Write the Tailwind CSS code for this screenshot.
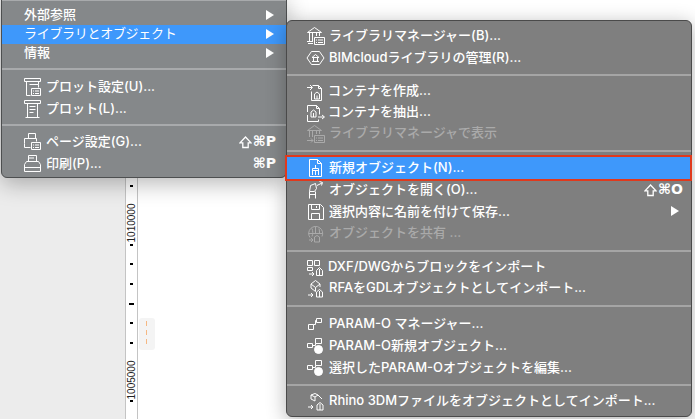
<!DOCTYPE html>
<html lang="ja">
<head>
<meta charset="UTF-8">
<title>Menu</title>
<script src="https://cdn.jsdelivr.net/npm/@tailwindcss/browser@4"></script>
</head>
<body class="bg-white">
<div class="relative w-[695px] h-[419px] overflow-hidden flex bg-white font-['Inter','Noto_Sans_CJK_JP',sans-serif] font-medium text-[13px] leading-none text-white">
  <!-- background: side panel + ruler -->
  <div class="w-[125px] h-full bg-[#ececec]"></div>
  <div class="relative w-[13px] h-full bg-white border-x border-[#c4c4c4] text-black">
    <span class="absolute left-[4px] top-[185px] w-[3px] h-[2px] bg-black"></span>
    <span class="absolute left-[4px] top-[244px] w-[3px] h-[2px] bg-black"></span>
    <span class="absolute left-[4px] top-[263px] w-[3px] h-[2px] bg-black"></span>
    <span class="absolute left-[4px] top-[283px] w-[3px] h-[2px] bg-black"></span>
    <span class="absolute left-[3px] top-[303px] w-[5px] h-[2px] bg-black"></span>
    <span class="absolute left-[4px] top-[322px] w-[3px] h-[2px] bg-black"></span>
    <span class="absolute left-[4px] top-[342px] w-[3px] h-[2px] bg-black"></span>
    <span class="absolute left-[4px] top-[400px] w-[3px] h-[2px] bg-black"></span>
    <span class="absolute left-[-15px] top-[218px] w-[42px] h-[10px] -rotate-90 text-center font-['Liberation_Sans',sans-serif] font-normal text-[10px] leading-[10px] text-[#222]">1010000</span>
    <span class="absolute left-[-15px] top-[375px] w-[42px] h-[10px] -rotate-90 text-center font-['Liberation_Sans',sans-serif] font-normal text-[10px] leading-[10px] text-[#222]">1005000</span>
  </div>
  <div class="relative flex-1 h-full bg-white">
    <div class="absolute left-[1px] top-[318px] w-[16px] h-[32px] rounded-[3px] bg-[#f4f4f4] pl-[7px] pt-[3px]">
      <svg class="block w-[1px] h-[26px]" viewBox="0 0 1 26" stroke="#f6b883"><path d="M.5 0v26" stroke-dasharray="5 4"/></svg>
    </div>
  </div>

  <!-- left menu -->
  <div class="absolute left-[1px] top-[-4px] w-[286px] h-[182px] pt-[2px] rounded-b-[6px] bg-[#85888a] border border-[#4d4f50] shadow-[0_6px_22px_rgba(0,0,0,0.28)] [&>div>span]:-translate-y-px">
    <div class="h-[2px] mb-[5px] bg-[#a8aaac]"></div>
    <div class="flex items-center h-[19px] pl-[22px] pr-[12px]"><span>外部参照</span><span class="ml-auto w-0 h-0 border-y-[5px] border-y-transparent border-l-[8px] border-l-white"></span></div>
    <div class="flex items-center h-[19px] pl-[22px] pr-[12px] bg-[#3e98fb]"><span class="font-normal tracking-[-0.3px]">ライブラリとオブジェクト</span><span class="ml-auto w-0 h-0 border-y-[5px] border-y-transparent border-l-[8px] border-l-white"></span></div>
    <div class="flex items-center h-[19px] pl-[22px] pr-[12px]"><span>情報</span><span class="ml-auto w-0 h-0 border-y-[5px] border-y-transparent border-l-[8px] border-l-white"></span></div>
    <div class="h-[2px] mt-[5px] mb-[6px] bg-[#a8aaac]"></div>
    <div class="flex items-center h-[22px] pl-[21px] pr-[10px]">
      <svg class="w-[19px] h-[20px] mr-[4px]" viewBox="0 0 19 20" fill="none" stroke="white"><path d="M1.500 1.500h16v3h-16zM3.500 4.500v14h4M15.500 4.500v3M6.500 7.500h9v3M8.500 11.500h9v7h-9zM10 14h1M12 14h4M10 16.500h1M12 16.500h4"/></svg>
      <span>プロット設定(U)...</span>
    </div>
    <div class="flex items-center h-[22px] pl-[21px] pr-[10px]">
      <svg class="w-[19px] h-[20px] mr-[4px]" viewBox="0 0 19 20" fill="none" stroke="white"><path d="M1.500 1.500h16v3h-16zM4.500 4.500v14h10v-14M6.500 7.500h6M6.500 10.500h6M6.500 13.500h4M2.500 18.500h14"/></svg>
      <span>プロット(L)...</span>
    </div>
    <div class="h-[2px] mt-[4px] mb-[5px] bg-[#a8aaac]"></div>
    <div class="flex items-center h-[22px] pl-[21px] pr-[10px]">
      <svg class="w-[19px] h-[20px] mr-[4px]" viewBox="0 0 19 20" fill="none" stroke="white"><path d="M5.500 6.500v-5h7v5M1.500 11.500v-5h12v3M1.500 11.500v4h6M8.500 10.500h9v7h-9zM10 13h1M12 13h4M10 15.500h1M12 15.500h4"/></svg>
      <span>ページ設定(G)...</span>
      <svg class="ml-auto mr-[1px] w-[13px] h-[13px]" viewBox="0 0 13 13" fill="none" stroke="white" stroke-width="1.300"><path d="M6.500 1L12 6.800H9.200V11.500H3.800V6.800H1z"/></svg>
      <span class="font-['DejaVu_Sans',sans-serif] font-bold text-[14px]">⌘P</span>
    </div>
    <div class="flex items-center h-[22px] pl-[21px] pr-[10px]">
      <svg class="w-[19px] h-[20px] mr-[4px]" viewBox="0 0 19 20" fill="none" stroke="white"><path d="M5.500 7.500v-6h8v6M1.500 17.500v-7l2-3h12l2 3v7zM1.500 13.500h16M6 4h5"/></svg>
      <span>印刷(P)...</span>
      <span class="ml-auto font-['DejaVu_Sans',sans-serif] font-bold text-[14px]">⌘P</span>
    </div>
  </div>

  <!-- submenu -->
  <div class="absolute left-[286px] top-[20px] w-[406px] h-[397px] pt-[4px] rounded-[6px] bg-[#7f7f7f] border border-[#4a4a4a] shadow-[0_4px_20px_rgba(0,0,0,0.3)] [&>div>span]:-translate-y-px">
    <div class="flex items-center h-[22px] pl-[19px]">
      <svg class="w-[19px] h-[20px] mr-[4px]" viewBox="0 0 19 20" fill="none" stroke="white"><path d="M1.500 6.500h14L8.500 1.500zM3.500 7v8M6.500 7v8M10.500 7v3M13.500 7v3M1 15.500h6M2 17.500h5M8.500 11.500h10v7h-10zM10 14h1M12 14h5M10 16.500h1M12 16.500h5"/></svg>
      <span>ライブラリマネージャー(B)...</span>
    </div>
    <div class="flex items-center h-[22px] pl-[19px]">
      <svg class="w-[19px] h-[20px] mr-[4px]" viewBox="0 0 19 20" fill="none" stroke="white"><path d="M5.500 3.500h8l4.500 6.500-4.500 6.500h-8L1 10zM6 9.500h7L9.500 6.500zM7.500 10v3M11.500 10v3M6 13.500h7"/></svg>
      <span>BIMcloudライブラリの管理(R)...</span>
    </div>
    <div class="h-[2px] mt-[5px] mb-[5px] bg-[#a5a5a5]"></div>
    <div class="flex items-center h-[21px] pl-[19px]">
      <svg class="w-[19px] h-[20px] mr-[3px]" viewBox="0 0 19 20" fill="none" stroke="white"><path d="M6.500 3.500h6l3 3v12h-10v-9M12.500 3.500v3h3M1 5.500h5M4 3l2.500 2.500L4 8M8.500 12l2.500-2 2.500 2v5h-5zM11 13.500v3.500"/></svg>
      <span>コンテナを作成...</span>
    </div>
    <div class="flex items-center h-[21px] pl-[19px]">
      <svg class="w-[19px] h-[20px] mr-[3px]" viewBox="0 0 19 20" fill="none" stroke="white"><path d="M1.500 9v-6.500h9l3 3v6M10.500 2.500v3h3M1.500 12v6.500h11v-2M5 9l2.500-2L10 9v5H5zM7.500 10v4M12 14h6M16 12l2.500 2-2.500 2"/></svg>
      <span>コンテナを抽出...</span>
    </div>
    <div class="flex items-center h-[21px] pl-[19px] text-[#aaaaaa]">
      <svg class="w-[19px] h-[20px] mr-[4px]" viewBox="0 0 19 20" fill="none" stroke="#aaaaaa"><path d="M1.500 6.500h14L8.500 1.500zM3.500 7v6M6.500 7v6M10.500 7v3M13.500 7v3M8.500 11.500h10v7h-10zM10 14h1M12 14h5M10 16.500h1M12 16.500h5M1 16.500h6M5 14.500l2 2-2 2"/></svg>
      <span>ライブラリマネージャで表示</span>
    </div>
    <div class="h-[2px] mt-[6px] mb-[5px] bg-[#a5a5a5]"></div>
    <div class="flex items-center h-[22px] pl-[19px] mr-[1px] bg-[#3e98fb] outline-2 outline-[#e0391c]">
      <svg class="w-[19px] h-[20px] mr-[4px]" viewBox="0 0 19 20" fill="none" stroke="white"><path d="M3.500 1.500h8l4 4v13h-12zM11.500 1.500v4h4M6.500 17v-6.500h6V17M6.500 12.500h6M9.500 7v3M9.500 12.500V17"/></svg>
      <span>新規オブジェクト(N)...</span>
    </div>
    <div class="flex items-center h-[22px] pl-[19px] pr-[8px]">
      <svg class="w-[19px] h-[20px] mr-[4px]" viewBox="0 0 19 20" fill="none" stroke="white"><path d="M4.500 5.500l5-2 1 5-2 3h-5zM3.500 11.500v7M9.500 11.500v7M3.500 14.500h6M11 5.500l5-2.500M13.500 1.500l3 1-1 3"/></svg>
      <span>オブジェクトを開く(O)...</span>
      <svg class="ml-auto mr-[1px] w-[13px] h-[13px]" viewBox="0 0 13 13" fill="none" stroke="white" stroke-width="1.300"><path d="M6.500 1L12 6.800H9.200V11.500H3.800V6.800H1z"/></svg>
      <span class="font-['DejaVu_Sans',sans-serif] font-bold text-[14px]">⌘O</span>
    </div>
    <div class="flex items-center h-[22px] pl-[19px] pr-[12px]">
      <svg class="w-[19px] h-[20px] mr-[4px]" viewBox="0 0 19 20" fill="none" stroke="white"><path d="M2.500 2.500h12l3 3v12h-15zM5.500 2.500v5h8v-5M5.500 17.500v-6h8v6M10.500 4v2"/></svg>
      <span>選択内容に名前を付けて保存...</span>
      <span class="ml-auto w-0 h-0 border-y-[5px] border-y-transparent border-l-[8px] border-l-white"></span>
    </div>
    <div class="flex items-center h-[21px] pl-[19px] text-[#aaaaaa]">
      <svg class="w-[19px] h-[20px] mr-[4px]" viewBox="0 0 19 20" fill="none" stroke="#aaaaaa"><path d="M4 13.500a7 7 0 1 1 12 -1M2.500 9.500h14M9.500 3v6M6 4.500c1 3 1 5 0 8M13 4.500c.5 2 .5 3 .5 5M8.500 13l2.500-1.500 2.500 1.500v5h-5zM3 16h4M5 14l2 2-2 2"/></svg>
      <span>オブジェクトを共有 ...</span>
    </div>
    <div class="h-[2px] mt-[6px] mb-[5px] bg-[#a5a5a5]"></div>
    <div class="flex items-center h-[21px] pl-[19px]">
      <svg class="w-[19px] h-[20px] mr-[3px]" viewBox="0 0 19 20" fill="none" stroke="white"><path d="M1.500 2.500h5v5h-5zM8.500 2.500h5v5h-5zM1.500 9.500h5v3h-5zM3 16h5M6 14l2 2-2 2M10.500 12.500l3-3 3 3v5h-6zM13.500 11v6.500"/></svg>
      <span>DXF/DWGからブロックをインポート</span>
    </div>
    <div class="flex items-center h-[21px] pl-[19px]">
      <svg class="w-[19px] h-[20px] mr-[4px]" viewBox="0 0 19 20" fill="none" stroke="white"><path d="M5 5l4.500-3.500L14 5l-4.500 3.500zM5 5v4l4.500 3.500M14 5v3M9.500 8.500v4M2 16h5M5 14l2 2-2 2M10.500 13l3-2.500 3 2.500v5h-6zM13.500 12v6"/></svg>
      <span>RFAをGDLオブジェクトとしてインポート...</span>
    </div>
    <div class="h-[2px] mt-[6px] mb-[6px] bg-[#a5a5a5]"></div>
    <div class="flex items-center h-[22px] pl-[19px]">
      <svg class="w-[19px] h-[20px] mr-[4px]" viewBox="0 0 19 20" fill="none" stroke="white"><path d="M2.500 10.500h5v5h-5zM10.500 4.500h5v4h-5zM7.500 10.500h2v-4h1"/></svg>
      <span>PARAM-O マネージャー...</span>
    </div>
    <div class="flex items-center h-[22px] pl-[19px]">
      <svg class="w-[19px] h-[20px] mr-[4px]" viewBox="0 0 19 20" fill="none" stroke="white"><path d="M1.500 7.500h5v4h-5zM9.500 2.500h6v5h-6zM6.500 9.500h3v-2"/><circle cx="12.500" cy="13.500" r="4" fill="white"/></svg>
      <span>PARAM-O新規オブジェクト...</span>
    </div>
    <div class="flex items-center h-[22px] pl-[19px]">
      <svg class="w-[19px] h-[20px] mr-[4px]" viewBox="0 0 19 20" fill="none" stroke="white"><path d="M1.500 7.500h5v4h-5zM9.500 2.500h6v5h-6zM6.500 9.500h3v-2"/><circle cx="12.500" cy="13.500" r="4" fill="white"/></svg>
      <span>選択したPARAM-Oオブジェクトを編集...</span>
    </div>
    <div class="h-[2px] mt-[5px] mb-[5px] bg-[#a5a5a5]"></div>
    <div class="flex items-center h-[21px] pl-[19px]">
      <svg class="w-[19px] h-[20px] mr-[4px]" viewBox="0 0 19 20" fill="none" stroke="white"><path d="M5 3l4-1.500L12 3l-3 2zM5 3v4l4 2M12 3l4 4M9 5v4M2 15h5M5 13l2 2-2 2M11 13l3-2.500 3 2.500v5h-6zM14 12v6"/></svg>
      <span>Rhino 3DMファイルをオブジェクトとしてインポート...</span>
    </div>
  </div>
</div>
</body>
</html>
